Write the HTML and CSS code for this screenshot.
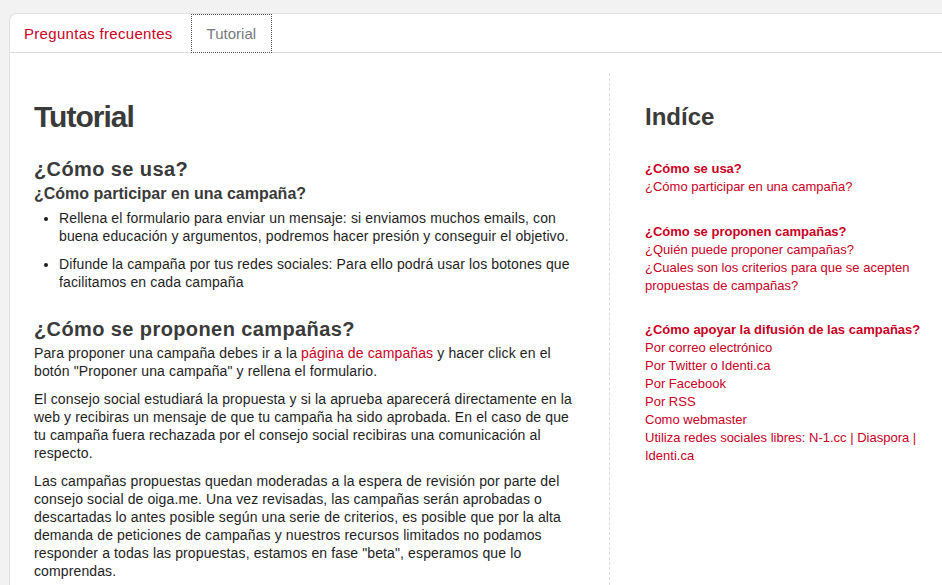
FILE: index.html
```html
<!DOCTYPE html>
<html lang="es">
<head>
<meta charset="utf-8">
<title>Tutorial</title>
<link rel="stylesheet" href="styles.css">
</head>
<body>
<div class="page">
  <div class="panel">
    <nav class="tabs">
      <a class="tab" href="#">Preguntas frecuentes</a>
      <a class="tab tab-active" href="#">Tutorial</a>
    </nav>
    <div class="content">
      <main class="main">
        <h1 class="title">Tutorial</h1>
        <h2 class="section">¿Cómo se usa?</h2>
        <h3 class="subsection">¿Cómo participar en una campaña?</h3>
        <ul class="bullets">
          <li>Rellena el formulario para enviar un mensaje: si enviamos muchos emails, con buena educación y argumentos, podremos hacer presión y conseguir el objetivo.</li>
          <li>Difunde la campaña por tus redes sociales: Para ello podrá usar los botones que facilitamos en cada campaña</li>
        </ul>
        <h2 class="section">¿Cómo se proponen campañas?</h2>
        <p>Para proponer una campaña debes ir a la <a class="link" href="#">página de campañas</a> y hacer click en el botón "Proponer una campaña" y rellena el formulario.</p>
        <p>El consejo social estudiará la propuesta y si la aprueba aparecerá directamente en la web y recibiras un mensaje de que tu campaña ha sido aprobada. En el caso de que tu campaña fuera rechazada por el consejo social recibiras una comunicación al respecto.</p>
        <p>Las campañas propuestas quedan moderadas a la espera de revisión por parte del consejo social de oiga.me. Una vez revisadas, las campañas serán aprobadas o descartadas lo antes posible según una serie de criterios, es posible que por la alta demanda de peticiones de campañas y nuestros recursos limitados no podamos responder a todas las propuestas, estamos en fase "beta", esperamos que lo comprendas.</p>
      </main>
      <aside class="toc">
        <h2 class="toc-title">Indíce</h2>
        <ul class="toc-group">
          <li class="toc-head"><a href="#">¿Cómo se usa?</a></li>
          <li><a href="#">¿Cómo participar en una campaña?</a></li>
        </ul>
        <ul class="toc-group">
          <li class="toc-head"><a href="#">¿Cómo se proponen campañas?</a></li>
          <li><a href="#">¿Quién puede proponer campañas?</a></li>
          <li><a href="#">¿Cuales son los criterios para que se acepten propuestas de campañas?</a></li>
        </ul>
        <ul class="toc-group">
          <li class="toc-head"><a href="#">¿Cómo apoyar la difusión de las campañas?</a></li>
          <li><a href="#">Por correo electrónico</a></li>
          <li><a href="#">Por Twitter o Identi.ca</a></li>
          <li><a href="#">Por Facebook</a></li>
          <li><a href="#">Por RSS</a></li>
          <li><a href="#">Como webmaster</a></li>
          <li><a href="#">Utiliza redes sociales libres: N-1.cc | Diaspora | Identi.ca</a></li>
        </ul>
      </aside>
    </div>
  </div>
</div>
</body>
</html>
```

FILE: styles.css
```css
html {
  overflow: hidden;
}

body {
  margin: 0;
  background: #f2f2f2;
  font-family: "Liberation Sans", Arial, Helvetica, sans-serif;
  font-size: 14px;
  line-height: 18px;
  color: #1e1e1e;
}

.page {
  padding: 13px 0 0 9px;
}

.panel {
  background: #ffffff;
  border-top: 1px solid #e2e2e2;
  border-left: 1px solid #e2e2e2;
  border-top-left-radius: 8px;
  min-height: 600px;
}

/* Tabs */
.tabs {
  display: flex;
  align-items: flex-start;
  height: 38px;
  border-bottom: 1px solid #dedede;
}

.tab {
  box-sizing: border-box;
  height: 39px;
  line-height: 37px;
  font-size: 15px;
  text-decoration: none;
  border: 1px solid transparent;
}

.tab:first-child {
  color: #c9001f;
  letter-spacing: 0.3px;
  padding: 0 14px 0 13px;
  margin-right: 3px;
}

.tab-active {
  color: #777a80;
  background: #ffffff;
  padding: 0 15px;
  border: 1px dotted #555555;
}

/* Content grid */
.content {
  display: grid;
  grid-template-columns: 599px 1fr;
  padding-top: 20px;
}

.main {
  padding: 0 27px 0 24px;
}

.title {
  margin: 26px 0 22px;
  font-size: 30px;
  line-height: 36px;
  letter-spacing: -1px;
  font-weight: bold;
  color: #3a3a3a;
}

.section {
  margin: 0 0 3px;
  font-size: 20px;
  line-height: 24px;
  letter-spacing: 0.4px;
  font-weight: bold;
  color: #3a3a3a;
}

.subsection {
  margin: 0 0 5px;
  font-size: 16px;
  line-height: 20px;
  font-weight: bold;
  color: #3a3a3a;
}

.bullets {
  margin: 0 0 26px;
  padding-left: 25px;
}

.bullets li {
  margin-bottom: 10px;
  letter-spacing: 0.12px;
}

.bullets li:last-child {
  margin-bottom: 0;
}

.main p {
  margin: 0 0 10px;
  letter-spacing: 0.12px;
}

.link {
  color: #c9001f;
  text-decoration: none;
}

/* Index column */
.toc {
  border-left: 1px dashed #dcdcdc;
  padding: 29px 12px 0 35px;
  font-size: 13px;
  line-height: 18px;
}

.toc-title {
  margin: 0 0 29px;
  font-size: 24px;
  line-height: 29px;
  font-weight: bold;
  color: #3a3a3a;
}

.toc-group {
  list-style: none;
  margin: 0 0 26.5px;
  padding: 0;
}

.toc-group a {
  color: #c9001f;
  text-decoration: none;
}

.toc-head a {
  font-weight: bold;
}
```
